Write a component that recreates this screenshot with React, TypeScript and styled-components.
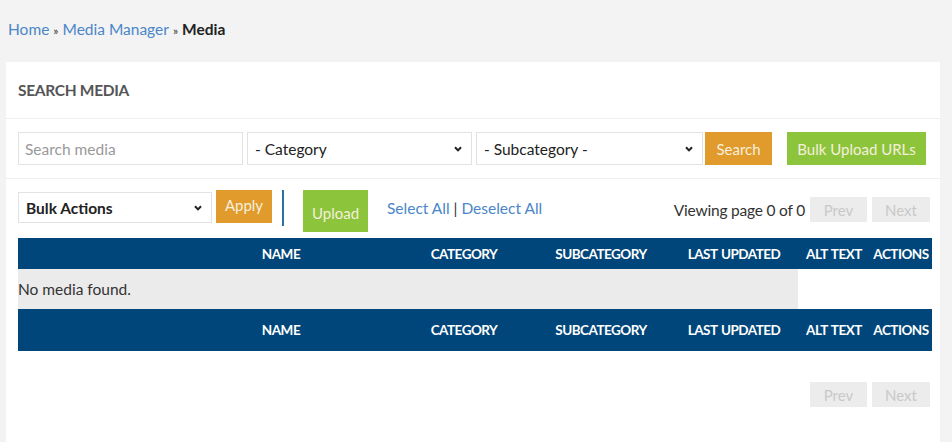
import styled, { createGlobalStyle } from "styled-components";

const GlobalStyle = createGlobalStyle`
  html, body {
    margin: 0;
    padding: 0;
    background: #f3f3f3;
    font-family: Lato, "Open Sans", sans-serif;
    color: #333;
  }
  * { box-sizing: border-box; }
`;

const Page = styled.div`
  width: 952px;
  height: 442px;
  overflow: hidden;
  padding: 0 12px 0 6px;
`;

const Breadcrumb = styled.div`
  height: 62px;
  padding: 20px 0 0 2px;
  font-size: 15.5px;
  color: #222;
  a {
    color: #4a86c8;
    text-decoration: none;
  }
  strong {
    font-weight: 700;
    color: #222;
  }
`;

const Sep = styled.span`
  color: #333;
  font-size: 12px;
  margin: 0 4px;
`;

const Card = styled.div`
  background: #fff;
  width: 934px;
  min-height: 380px;
`;

const CardHeader = styled.div`
  height: 57px;
  padding: 19px 12px 0;
  font-size: 15.5px;
  font-weight: 700;
  color: #555;
  letter-spacing: -0.3px;
  border-bottom: 1px solid #efefef;
`;

const SearchRow = styled.div`
  display: flex;
  align-items: center;
  padding: 13px 12px 13px;
  border-bottom: 1px solid #efefef;
`;

const Input = styled.input`
  width: 225px;
  height: 33px;
  border: 1px solid #e2e2e2;
  padding: 0 6px;
  font-family: inherit;
  font-size: 15.5px;
  color: #333;
  outline: none;
  &::placeholder {
    color: #999;
  }
`;

const SelectWrap = styled.div<{ $w: number; $h?: number }>`
  position: relative;
  width: ${(p) => p.$w}px;
  height: ${(p) => p.$h ?? 33}px;
  margin-left: 4px;
  &:first-child {
    margin-left: 0;
  }
  svg {
    position: absolute;
    right: 10px;
    top: 50%;
    margin-top: -3px;
    pointer-events: none;
  }
`;

const Select = styled.select<{ $bold?: boolean }>`
  appearance: none;
  width: 100%;
  height: 100%;
  border: 1px solid #e2e2e2;
  background: #fff;
  padding: 0 7px;
  font-family: inherit;
  font-size: 15.5px;
  font-weight: ${(p) => (p.$bold ? 700 : 400)};
  color: #222;
  border-radius: 0;
  outline: none;
`;

const Button = styled.button<{ $color: "orange" | "green" | "grey"; $w: number; $h: number }>`
  width: ${(p) => p.$w}px;
  height: ${(p) => p.$h}px;
  border: none;
  border-radius: 0;
  font-family: inherit;
  font-size: 15px;
  padding: 0;
  cursor: pointer;
  white-space: nowrap;
  background: ${(p) =>
    p.$color === "orange" ? "#e19b2d" : p.$color === "green" ? "#8cc43c" : "#ececec"};
  color: ${(p) => (p.$color === "grey" ? "#c9c9c9" : "#f6efdc")};
`;

const Toolbar = styled.div`
  display: flex;
  align-items: flex-start;
  padding: 11px 10px 0 12px;
  height: 59px;
`;

const Divider = styled.div`
  width: 2px;
  height: 36px;
  background: #2f6fa6;
  margin: 0 19px 0 10px;
`;

const Links = styled.div`
  margin: 9px 0 0 19px;
  font-size: 15.5px;
  color: #333;
  a {
    color: #4a86c8;
    text-decoration: none;
  }
`;

const Pager = styled.div`
  margin-left: auto;
  display: flex;
  align-items: center;
  gap: 5px;
  padding-top: 7px;
`;

const Viewing = styled.span`
  font-size: 15.5px;
  color: #333;
  letter-spacing: -0.2px;
`;

const Table = styled.table`
  margin-left: 12px;
  width: 914px;
  table-layout: fixed;
  border-collapse: collapse;
`;

const HeadRow = styled.tr<{ $h: number }>`
  background: #00467a;
  height: ${(p) => p.$h}px;
  th {
    color: #fff;
    font-size: 13.5px;
    font-weight: 700;
    letter-spacing: -0.5px;
    word-spacing: 1px;
    text-align: center;
    padding: 0;
    white-space: nowrap;
  }
`;

const EmptyCell = styled.td`
  background: #ebebeb;
  height: 40px;
  padding: 0;
  font-size: 15.5px;
  color: #333;
`;

const BottomPager = styled.div`
  display: flex;
  justify-content: flex-end;
  gap: 5px;
  padding: 31px 10px 0 0;
`;

const Chevron = () => (
  <svg width="8" height="6" viewBox="0 0 8 6">
    <path d="M1 1.2 L4 4.4 L7 1.2" fill="none" stroke="#222" strokeWidth="2" />
  </svg>
);

const columns = ["", "NAME", "CATEGORY", "SUBCATEGORY", "LAST UPDATED", "ALT TEXT", "ACTIONS"];
const widths = [148, 230, 136, 138, 128, 72, 62];

function App() {
  return (
    <Page>
      <GlobalStyle />
      <Breadcrumb>
        <a href="#">Home</a>
        <Sep>»</Sep>
        <a href="#">Media Manager</a>
        <Sep>»</Sep>
        <strong>Media</strong>
      </Breadcrumb>
      <Card>
        <CardHeader>SEARCH MEDIA</CardHeader>
        <SearchRow>
          <Input placeholder="Search media" />
          <SelectWrap $w={225}>
            <Select>
              <option>- Category</option>
            </Select>
            <Chevron />
          </SelectWrap>
          <SelectWrap $w={227}>
            <Select>
              <option>- Subcategory -</option>
            </Select>
            <Chevron />
          </SelectWrap>
          <Button $color="orange" $w={67} $h={33} style={{ marginLeft: 2 }}>
            Search
          </Button>
          <Button $color="green" $w={139} $h={33} style={{ marginLeft: 15 }}>
            Bulk Upload URLs
          </Button>
        </SearchRow>
        <Toolbar>
          <SelectWrap $w={194} $h={31} style={{ marginTop: 2 }}>
            <Select $bold>
              <option>Bulk Actions</option>
            </Select>
            <Chevron />
          </SelectWrap>
          <Button $color="orange" $w={56} $h={33} style={{ marginLeft: 4, paddingBottom: 3 }}>
            Apply
          </Button>
          <Divider />
          <Button $color="green" $w={65} $h={42} style={{ paddingTop: 4 }}>
            Upload
          </Button>
          <Links>
            <a href="#">Select All</a> | <a href="#">Deselect All</a>
          </Links>
          <Pager>
            <Viewing>Viewing page 0 of 0</Viewing>
            <Button $color="grey" $w={57} $h={25}>
              Prev
            </Button>
            <Button $color="grey" $w={58} $h={25}>
              Next
            </Button>
          </Pager>
        </Toolbar>
        <Table>
          <colgroup>
            {widths.map((w, i) => (
              <col key={i} style={{ width: w }} />
            ))}
          </colgroup>
          <thead>
            <HeadRow $h={31}>
              {columns.map((c, i) => (
                <th key={i}>{c}</th>
              ))}
            </HeadRow>
          </thead>
          <tbody>
            <tr>
              <EmptyCell colSpan={5}>No media found.</EmptyCell>
              <td />
              <td />
            </tr>
          </tbody>
          <tfoot>
            <HeadRow $h={42}>
              {columns.map((c, i) => (
                <th key={i}>{c}</th>
              ))}
            </HeadRow>
          </tfoot>
        </Table>
        <BottomPager>
          <Button $color="grey" $w={57} $h={25}>
            Prev
          </Button>
          <Button $color="grey" $w={58} $h={25}>
            Next
          </Button>
        </BottomPager>
      </Card>
    </Page>
  );
}

export default App;
